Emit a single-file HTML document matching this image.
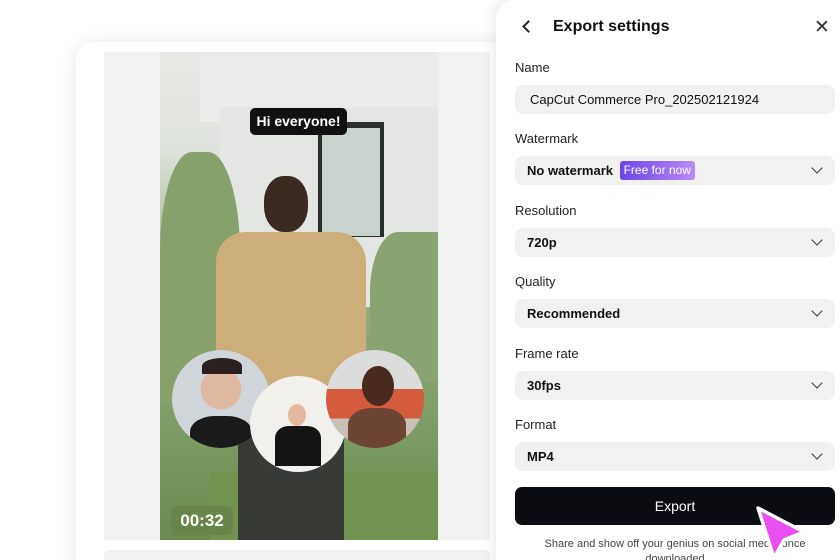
<!DOCTYPE html>
<html><head><meta charset="utf-8"><style>
*{box-sizing:border-box;margin:0;padding:0}
html,body{width:840px;height:560px;overflow:hidden}
body{background:#fff;font-family:"Liberation Sans",Arial,sans-serif;position:relative}
.card{position:absolute;left:76px;top:42px;width:460px;height:540px;background:#fff;border-radius:18px;box-shadow:0 2px 18px rgba(0,0,0,.10)}
.gray{position:absolute;left:104px;top:52px;width:386px;height:488px;background:#f1f1f1}
.gray2{position:absolute;left:104px;top:550px;width:386px;height:20px;background:#f1f1f1;border-radius:6px}
.video{position:absolute;left:160px;top:52px;width:278px;height:488px;overflow:hidden;
background:linear-gradient(180deg,#e6e9e4 0%,#dfe3dd 20%,#a9bb95 40%,#8aa570 60%,#7a9a60 80%,#6a8a50 100%)}
.circ{position:absolute;border-radius:50%;overflow:hidden}
.panel{position:absolute;left:496px;top:0;width:360px;height:580px;background:#fff;border-radius:18px 0 0 0;box-shadow:-2px 0 14px rgba(0,0,0,.10)}
.lbl{position:absolute;left:19px;font-size:13px;color:#222}
.fld{position:absolute;left:19px;width:320px;height:29px;background:#f1f1f1;border-radius:8px;font-size:13px;font-weight:bold;color:#111;line-height:29px;padding-left:12px}
.chev{position:absolute;right:14px;width:8px;height:8px;border-right:1.4px solid #333;border-bottom:1.4px solid #333;transform:rotate(45deg);top:8px}
</style></head><body>
<div class="card"></div>
<div class="gray"></div>
<div class="gray2"></div>
<div class="video">
 <div style="position:absolute;left:40px;top:0;width:238px;height:70px;background:#e9ecea"></div>
 <div style="position:absolute;left:60px;top:55px;width:218px;height:200px;background:#e3e6e2"></div>
 <div style="position:absolute;left:158px;top:70px;width:66px;height:115px;background:#2b2f2b"></div>
 <div style="position:absolute;left:162px;top:76px;width:58px;height:108px;background:#c9d3cd"></div>
 <div style="position:absolute;left:0;top:100px;width:80px;height:250px;background:#86a26a;border-radius:40% 40% 0 0"></div>
 <div style="position:absolute;left:210px;top:180px;width:70px;height:150px;background:#89a470;border-radius:40% 0 0 0"></div>
 <div style="position:absolute;left:50px;top:420px;width:228px;height:70px;background:#729250"></div>
 <div style="position:absolute;left:104px;top:124px;width:44px;height:56px;background:#3a2a22;border-radius:45%"></div>
 <div style="position:absolute;left:56px;top:180px;width:150px;height:170px;background:#cdae78;border-radius:30px 30px 8px 8px"></div>
 <div style="position:absolute;left:78px;top:350px;width:106px;height:138px;background:#383a35"></div>
 <div style="position:absolute;left:90px;top:56px;width:97px;height:27px;background:#111;border-radius:5px;color:#fff;font-size:14px;font-weight:bold;line-height:27px;text-align:center">Hi everyone!</div>
 <div style="position:absolute;left:11px;top:454px;width:62px;height:29px;background:#6a8549;border-radius:6px;color:#fff;font-size:17px;font-weight:bold;line-height:29px;text-align:center">00:32</div>
</div>
<div class="circ" style="left:172px;top:350px;width:98px;height:98px;background:radial-gradient(circle at 50% 40%,#e0b8a0 0 26%,#cfd5d8 27% 100%)"><div style="position:absolute;left:18px;top:66px;width:62px;height:40px;background:#1a1a1a;border-radius:40% 40% 0 0"></div><div style="position:absolute;left:30px;top:8px;width:40px;height:16px;background:#2a2020;border-radius:50% 50% 0 0"></div></div>
<div class="circ" style="left:250px;top:376px;width:96px;height:96px;background:#f2f0ec"><div style="position:absolute;left:38px;top:28px;width:18px;height:22px;background:#e4b89c;border-radius:50%"></div><div style="position:absolute;left:25px;top:50px;width:46px;height:40px;background:#141414;border-radius:30% 30% 0 0"></div></div>
<div class="circ" style="left:326px;top:350px;width:98px;height:98px;background:linear-gradient(180deg,#dcdcdc 0 40%,#d45b3c 40% 70%,#c9c0b8 70%)"><div style="position:absolute;left:36px;top:16px;width:32px;height:40px;background:#4a2b20;border-radius:50%"></div><div style="position:absolute;left:22px;top:58px;width:58px;height:42px;background:#6e4434;border-radius:40% 40% 0 0"></div></div>

<div class="panel">
 <div style="position:absolute;left:28px;top:22px;width:9px;height:9px;border-left:2px solid #222;border-bottom:2px solid #222;transform:rotate(45deg)"></div>
 <div style="position:absolute;left:57px;top:18px;font-size:16px;font-weight:bold;color:#111">Export settings</div>
 <div style="position:absolute;left:318px;top:19px;font-size:19px;color:#333;line-height:18px">✕</div>
 <div class="lbl" style="top:60px">Name</div>
 <div class="fld" style="top:85px;font-weight:normal;color:#111;padding-left:15px">CapCut Commerce Pro_202502121924</div>
 <div class="lbl" style="top:131px">Watermark</div>
 <div class="fld" style="top:156px">No watermark <span style="display:inline-block;background:linear-gradient(90deg,#6b45e8,#b98cf5);color:#fff;font-weight:normal;font-size:12px;line-height:19px;padding:0 4px;border-radius:3px;margin-left:3px;vertical-align:1px">Free for now</span><div class="chev"></div></div>
 <div class="lbl" style="top:203px">Resolution</div>
 <div class="fld" style="top:228px">720p<div class="chev"></div></div>
 <div class="lbl" style="top:274px">Quality</div>
 <div class="fld" style="top:299px">Recommended<div class="chev"></div></div>
 <div class="lbl" style="top:346px">Frame rate</div>
 <div class="fld" style="top:371px">30fps<div class="chev"></div></div>
 <div class="lbl" style="top:417px">Format</div>
 <div class="fld" style="top:442px">MP4<div class="chev"></div></div>
 <div style="position:absolute;left:19px;top:487px;width:320px;height:38px;background:#0c0d12;border-radius:7px;color:#fff;font-size:14px;line-height:38px;text-align:center">Export</div>
 <div style="position:absolute;left:19px;top:537px;width:320px;font-size:11px;color:#444;text-align:center;line-height:15px">Share and show off your genius on social media once downloaded</div>
</div>
<svg style="position:absolute;left:750px;top:500px" width="70" height="62" viewBox="0 0 70 62"><path d="M8 8 L54 32 L34 40 L24 58 Z" fill="#e94ef0" stroke="#fff" stroke-width="3.5" stroke-linejoin="round"/></svg>
</body></html>
